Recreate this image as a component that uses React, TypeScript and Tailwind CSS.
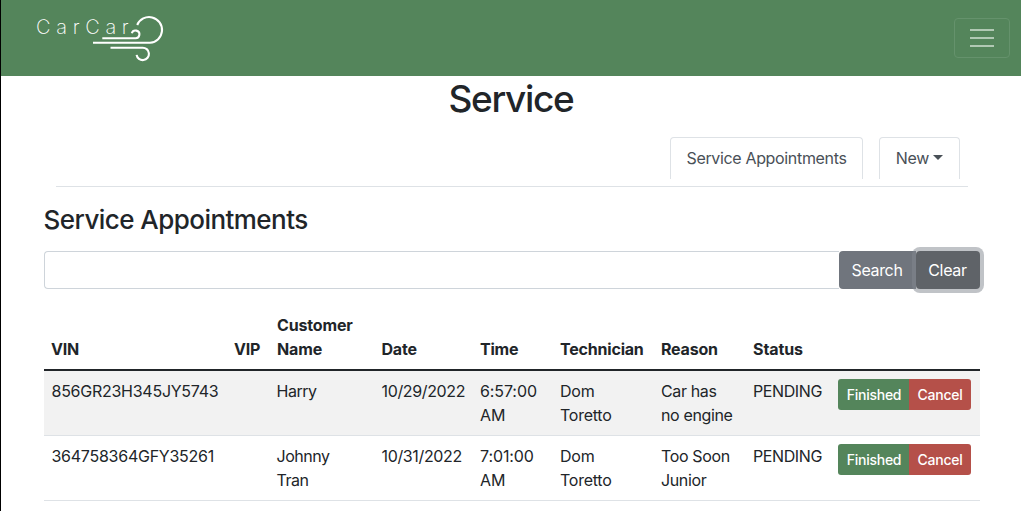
import React from "react";

type Appointment = {
  vin: string;
  customer: string;
  date: string;
  time: string;
  technician: string;
  reason: string;
  status: string;
};

const appointments: Appointment[] = [
  { vin: "856GR23H345JY5743", customer: "Harry", date: "10/29/2022", time: "6:57:00 AM", technician: "Dom Toretto", reason: "Car has no engine", status: "PENDING" },
  { vin: "364758364GFY35261", customer: "Johnny Tran", date: "10/31/2022", time: "7:01:00 AM", technician: "Dom Toretto", reason: "Too Soon Junior", status: "PENDING" },
];

function Logo() {
  return (
    <div className="flex text-white">
      <span className="mt-[15px] w-[55px] text-[20px] leading-[24px] font-extralight tracking-[5.7px] whitespace-nowrap">CarCar</span>
      <svg width="74" height="50" viewBox="91 13 74 50" className="mt-[13px] block" fill="none" stroke="currentColor" strokeWidth="2.1">
        <path d="M102.3 38.3H135.3A3.9 3.9 0 1 0 131.8 33.2" />
        <path d="M93 42.8H150A12.9 12.9 0 1 0 137.2 25" />
        <path d="M110.5 47.7H142.3A6.2 6.2 0 1 1 136.6 54.8" />
      </svg>
    </div>
  );
}

function Header() {
  return (
    <header className="flex h-[76px] items-start justify-between bg-[#54855b] pr-[11px] pl-[35px]">
      <Logo />
      <button aria-label="Toggle navigation" className="mt-[18px] flex h-10 w-14 items-center justify-center rounded-[4px] border border-[#65926c]">
        <svg width="30" height="30" viewBox="0 0 30 30" stroke="#b1c9b4" strokeWidth="2">
          <path d="M3 7H27M3 15H27M3 23H27" />
        </svg>
      </button>
    </header>
  );
}

function Tabs() {
  return (
    <nav className="mx-3 flex h-[50px] items-start justify-end gap-4 border-b border-[#dee2e6] pr-2 text-[#495057]">
      <button className="h-[42px] w-[193px] rounded-t-[4px] border border-b-0 border-[#dee2e6] pb-[2px] tracking-[-0.34px]">Service Appointments</button>
      <button className="flex h-[42px] w-[81px] items-center justify-center gap-1 rounded-t-[4px] border border-b-0 border-[#dee2e6] pb-[2px] tracking-[-0.28px]">
        New
        <span className="mb-[1px] border-x-[5px] border-t-[5px] border-x-transparent border-t-[#495057]" />
      </button>
    </nav>
  );
}

function SearchBar() {
  return (
    <div className="mt-[14px] flex h-[38px]">
      <input aria-label="Search" className="min-w-0 flex-1 rounded-l-[4px] border border-r-0 border-[#ced4da] bg-white outline-none" />
      <button className="w-[77px] rounded-l-[4px] bg-[#70757d] pr-[1px] tracking-[-0.35px] text-white">Search</button>
      <button className="relative w-16 rounded-[4px] bg-[#5f6368] pr-[1px] tracking-[-0.3px] text-white shadow-[0_0_0_4px_rgba(130,135,143,0.5)]">Clear</button>
    </div>
  );
}

function AppointmentsTable() {
  return (
    <table className="mt-4 w-[936px] table-fixed border-collapse text-left leading-6">
      <colgroup>
        <col className="w-[183px]" />
        <col className="w-[42px]" />
        <col className="w-[104px]" />
        <col className="w-[99px]" />
        <col className="w-[80px]" />
        <col className="w-[101px]" />
        <col className="w-[92px]" />
        <col className="w-[85px]" />
        <col className="w-[150px]" />
      </colgroup>
      <thead>
        <tr className="border-b-2 border-[#212529] align-bottom tracking-[-0.2px]">
          <th className="py-2 pl-[7px] font-bold">VIN</th>
          <th className="py-2 pl-[7px] font-bold">VIP</th>
          <th className="p-2 font-bold tracking-[-0.15px]">Customer Name</th>
          <th className="py-2 pl-[8.5px] font-bold">Date</th>
          <th className="p-2 font-bold">Time</th>
          <th className="p-2 font-bold">Technician</th>
          <th className="p-2 font-bold">Reason</th>
          <th className="p-2 font-bold tracking-[-0.1px]">Status</th>
          <th className="p-2"></th>
        </tr>
      </thead>
      <tbody>
        {appointments.map((a) => (
          <tr key={a.vin} className="h-[65px] border-b border-[#dee2e6] align-top tracking-[-0.3px] odd:bg-[#f2f2f2]">
            <td className="py-2 pl-[7.5px] tracking-[-0.26px]">{a.vin}</td>
            <td className="p-2"></td>
            <td className="py-2 pr-2 pl-[7.5px] tracking-[-0.45px]">{a.customer}</td>
            <td className="py-2 pl-[8.5px] tracking-[-0.35px]">{a.date}</td>
            <td className="py-2 pl-2 tracking-[-0.1px]">{a.time}</td>
            <td className="p-2 tracking-[-0.25px]">{a.technician}</td>
            <td className="py-2 pr-2 pl-2 tracking-[-0.36px]">{a.reason}</td>
            <td className="py-2 pl-2 tracking-[-0.4px]">{a.status}</td>
            <td className="p-2">
              <div className="flex h-[31px] text-[14px] leading-[21px] font-medium tracking-[-0.25px] text-white">
                <button className="w-[71px] rounded-l-[3px] bg-[#54855b] pl-[1px]">Finished</button>
                <button className="w-[62px] rounded-r-[3px] bg-[#b55049]">Cancel</button>
              </div>
            </td>
          </tr>
        ))}
      </tbody>
    </table>
  );
}

export default function App() {
  return (
    <div className="h-[511px] w-[1021px] overflow-hidden border-l border-black bg-white font-['Inter',sans-serif] text-[16px] leading-6 text-[#212529]">
      <Header />
      <main className="pr-[41px] pl-[43px]">
        <h1 className="h-[61px] pr-[2px] text-center text-[37px] leading-[46px] font-medium tracking-[-1.3px]">Service</h1>
        <Tabs />
        <h2 className="-ml-[0.5px] mt-[16px] text-[26px] leading-[34px] font-medium tracking-[-0.55px]">Service Appointments</h2>
        <SearchBar />
        <AppointmentsTable />
      </main>
    </div>
  );
}
